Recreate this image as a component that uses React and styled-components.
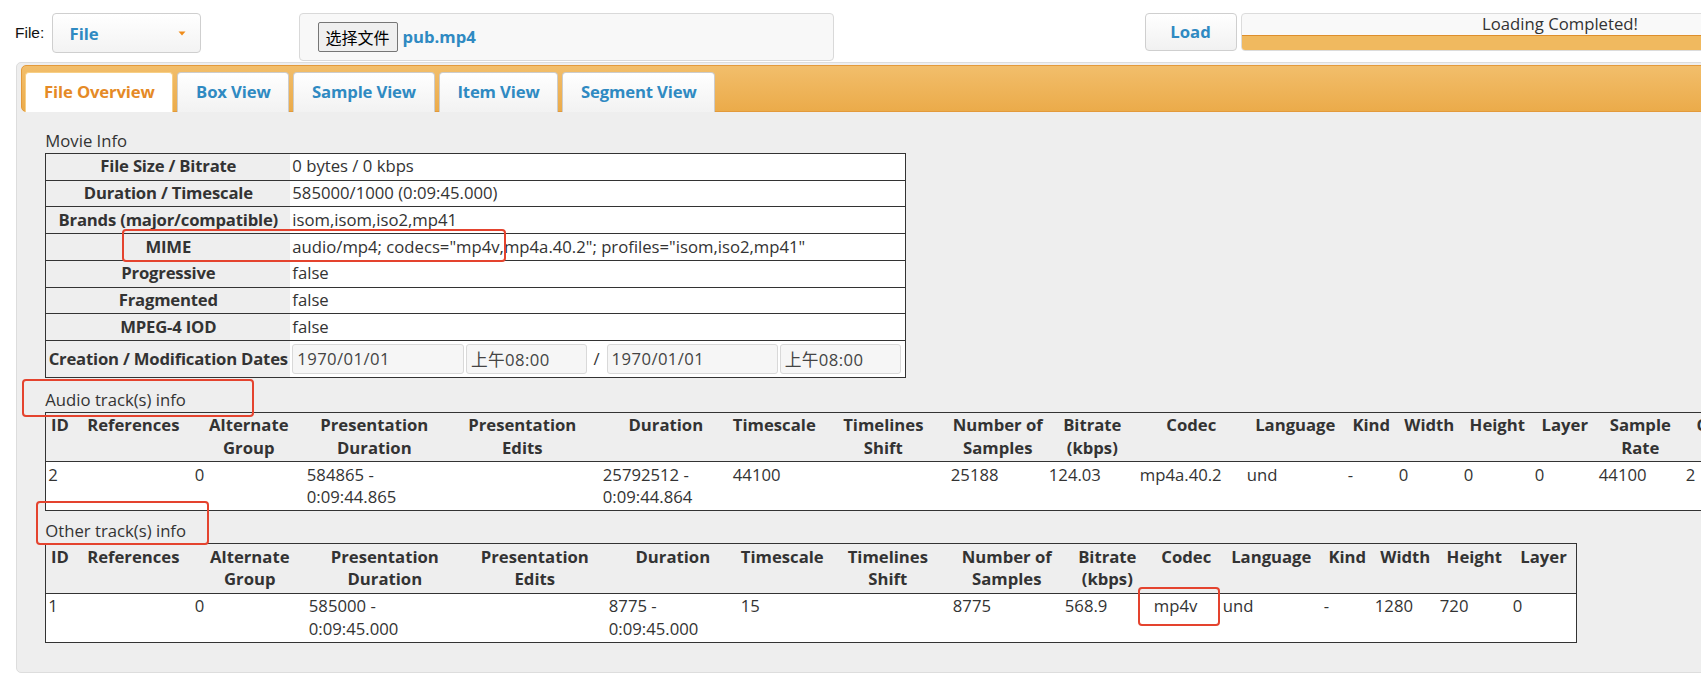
import React from 'react';
import styled, { createGlobalStyle } from 'styled-components';

const FONT = `"Open Sans", "Noto Sans CJK SC", sans-serif`;

const GlobalStyle = createGlobalStyle`
  html, body { margin: 0; padding: 0; overflow: hidden; background: #fff; }
  body { font-family: ${FONT}; font-size: 16.7px; color: #333; }
  * { box-sizing: border-box; }
`;

const Page = styled.div`
  position: relative;
  width: 1900px;
  padding-top: 13px;
`;

const TopBar = styled.div`
  display: flex;
  align-items: flex-start;
  height: 48px;
`;

const FieldLabel = styled.span`
  margin-left: 15px;
  width: 36.5px;
  line-height: 40px;
  font-family: "Liberation Sans", Arial, sans-serif;
  font-size: 15.5px;
  color: #111;
`;

const Select = styled.div`
  width: 149px;
  height: 40px;
  display: flex;
  align-items: center;
  justify-content: space-between;
  padding: 0 14px 0 17px;
  border: 1px solid #cfcfcf;
  border-radius: 4px;
  background: linear-gradient(#ffffff, #f3f3f3);
  color: #2f8ac2;
  font-weight: 700;
`;

const FileBox = styled.div`
  margin-left: 98px;
  width: 535px;
  height: 47.5px;
  display: flex;
  align-items: center;
  gap: 5px;
  padding-left: 18px;
  border: 1px solid #d9d9d9;
  border-radius: 4px;
  background: #f8f8f8;
`;

const NativeButton = styled.button`
  height: 30px;
  padding: 0 7px;
  border: 1px solid #767676;
  border-radius: 2px;
  background: #efefef;
  font-family: "Noto Sans CJK SC", sans-serif;
  font-size: 16px;
  color: #000;
`;

const FileName = styled.span`
  color: #2f8ac2;
  font-weight: 700;
`;

const LoadButton = styled.div`
  margin-left: 311px;
  width: 92px;
  height: 37.5px;
  display: flex;
  align-items: center;
  justify-content: center;
  border: 1px solid #cfcfcf;
  border-radius: 4px;
  background: linear-gradient(#ffffff, #f1f1f1);
  color: #2f8ac2;
  font-weight: 700;
`;

const Progress = styled.div`
  margin-left: 4px;
  width: 639px;
  height: 37.5px;
  display: flex;
  flex-direction: column;
  border: 1px solid #dcdcdc;
  border-radius: 4px;
  overflow: hidden;
  background: #f9f9f9;
`;

const ProgressLabel = styled.div`
  height: 20.7px;
  line-height: 20px;
  text-align: center;
  color: #333;
`;

const ProgressFill = styled.div`
  flex: 1;
  border-top: 1px solid #de8f2c;
  background: #f0b95f;
`;

const Container = styled.div`
  margin: 1px 0 0 16px;
  width: 1880px;
  border: 1px solid #dddddd;
  border-radius: 5px;
  background: #eeeeee;
  padding: 2.3px 4.3px 2.3px;
`;

const TabBar = styled.div`
  height: 46.7px;
  display: flex;
  align-items: flex-end;
  gap: 3.9px;
  padding: 0 3px;
  border: 1px solid #e39a3b;
  border-radius: 5px;
  background: linear-gradient(#f2be6b, #ebab4a);
`;

const Tab = styled.div`
  height: 40px;
  margin-bottom: -1px;
  padding: 0 17.8px;
  line-height: 38px;
  font-weight: 700;
  letter-spacing: -0.15px;
  border: 1px solid ${p => (p.$active ? '#f7cf86' : '#cccccc')};
  border-bottom: none;
  border-radius: 4px 4px 0 0;
  background: ${p => (p.$active ? '#ffffff' : 'linear-gradient(#ffffff, #f2f2f2)')};
  color: ${p => (p.$active ? '#e58a26' : '#2f8ac2')};
`;

const Panel = styled.div`
  padding: 18.3px 0 27px 24px;
`;

const SectionLabel = styled.div`
  line-height: 22.7px;
  margin-top: ${p => p.$gap}px;
`;

const MovieTable = styled.table`
  width: 861px;
  table-layout: fixed;
  border-collapse: collapse;
  border: 1px solid #333;
  line-height: 22.7px;
  tr { border-top: 1px solid #333; }
`;

const HeadCell = styled.th`
  width: 244.5px;
  padding: 1.5px 1px;
  background: #eeeeee;
  font-weight: 700;
  letter-spacing: -0.2px;
  text-align: center;
  white-space: nowrap;
`;

const ValueCell = styled.td`
  padding: 1.5px 2px;
  background: #ffffff;
  white-space: nowrap;
`;

const DateRow = styled.div`
  height: 33px;
  display: flex;
  align-items: center;
`;

const DateInput = styled.input`
  flex: none;
  width: ${p => p.$w}px;
  height: 30px;
  margin-right: ${p => p.$gap}px;
  padding: 0 4px;
  border: 1px solid #d9d9d9;
  border-radius: 3px;
  background: #f6f6f6;
  font-family: ${FONT};
  font-size: 16.7px;
  letter-spacing: 0.4px;
  color: #444;
  outline: none;
`;

const Slash = styled.span`
  flex: none;
  padding: 0 7px 0 6px;
  color: #333;
`;

const TrackTable = styled.table`
  table-layout: fixed;
  width: ${p => p.$w}px;
  border-collapse: collapse;
  border: 1px solid #333;
  line-height: 22.7px;
`;

const TrackHead = styled.th`
  padding: 1.5px 2px;
  font-weight: 700;
  text-align: center;
  vertical-align: top;
  white-space: nowrap;
  border-bottom: 1px solid #333;
`;

const TrackCell = styled.td`
  padding: 1.5px 2px;
  background: #ffffff;
  text-align: left;
  vertical-align: top;
  white-space: nowrap;
`;

const Mark = styled.div`
  position: absolute;
  left: ${p => p.$x}px;
  top: ${p => p.$y}px;
  width: ${p => p.$w}px;
  height: ${p => p.$h}px;
  border: 2px solid #e4432e;
  border-radius: 4px;
  pointer-events: none;
`;

const Caret = () => (
  <svg width="8" height="5" viewBox="0 0 8 5">
    <polygon points="0.5,0.5 7.5,0.5 4,4.5" fill="#ef8c1a" />
  </svg>
);

const movieRows = [
  ['File Size / Bitrate', '0 bytes / 0 kbps'],
  ['Duration / Timescale', '585000/1000 (0:09:45.000)'],
  ['Brands (major/compatible)', 'isom,isom,iso2,mp41'],
  ['MIME', 'audio/mp4; codecs="mp4v,mp4a.40.2"; profiles="isom,iso2,mp41"'],
  ['Progressive', 'false'],
  ['Fragmented', 'false'],
  ['MPEG-4 IOD', 'false'],
];

const audioCols = [
  [28, ['ID'], ['2']],
  [119, ['References'], []],
  [112, ['Alternate', 'Group'], ['0']],
  [139, ['Presentation', 'Duration'], ['584865 -', '0:09:44.865']],
  [157, ['Presentation', 'Edits'], []],
  [130, ['Duration'], ['25792512 -', '0:09:44.864']],
  [87, ['Timescale'], ['44100']],
  [131, ['Timelines', 'Shift'], []],
  [98, ['Number of', 'Samples'], ['25188']],
  [91, ['Bitrate', '(kbps)'], ['124.03']],
  [107, ['Codec'], ['mp4a.40.2']],
  [101, ['Language'], ['und']],
  [51, ['Kind'], ['-']],
  [65, ['Width'], ['0']],
  [71, ['Height'], ['0']],
  [64, ['Layer'], ['0']],
  [87, ['Sample', 'Rate'], ['44100']],
  [94, ['Channel', 'Count'], ['2']],
  [80, ['Volume'], ['1']],
];

const otherCols = [
  [28, ['ID'], ['1']],
  [119, ['References'], []],
  [114, ['Alternate', 'Group'], ['0']],
  [156, ['Presentation', 'Duration'], ['585000 -', '0:09:45.000']],
  [144, ['Presentation', 'Edits'], []],
  [132, ['Duration'], ['8775 -', '0:09:45.000']],
  [86, ['Timescale'], ['15']],
  [126, ['Timelines', 'Shift'], []],
  [112, ['Number of', 'Samples'], ['8775']],
  [89, ['Bitrate', '(kbps)'], ['568.9']],
  [69, ['Codec'], ['mp4v']],
  [101, ['Language'], ['und']],
  [51, ['Kind'], ['-']],
  [65, ['Width'], ['1280']],
  [73, ['Height'], ['720']],
  [66, ['Layer'], ['0']],
];

const Lines = ({ lines }) =>
  lines.map((l, i) => (
    <React.Fragment key={i}>
      {i > 0 && <br />}
      {l}
    </React.Fragment>
  ));

const Track = ({ cols }) => {
  const total = cols.reduce((s, c) => s + c[0], 0);
  return (
    <TrackTable $w={total}>
      <colgroup>
        {cols.map((c, i) => (
          <col key={i} style={{ width: c[0] }} />
        ))}
      </colgroup>
      <thead>
        <tr>
          {cols.map((c, i) => (
            <TrackHead key={i}>
              <Lines lines={c[1]} />
            </TrackHead>
          ))}
        </tr>
      </thead>
      <tbody>
        <tr>
          {cols.map((c, i) => (
            <TrackCell key={i}>
              {c[2].length ? <Lines lines={c[2]} /> : <>&nbsp;<br />&nbsp;</>}
            </TrackCell>
          ))}
        </tr>
      </tbody>
    </TrackTable>
  );
};

const tabs = ['File Overview', 'Box View', 'Sample View', 'Item View', 'Segment View'];

export default function App() {
  return (
    <>
      <GlobalStyle />
      <Page>
        <TopBar>
          <FieldLabel>File:</FieldLabel>
          <Select>
            <span>File</span>
            <Caret />
          </Select>
          <FileBox>
            <NativeButton>选择文件</NativeButton>
            <FileName>pub.mp4</FileName>
          </FileBox>
          <LoadButton>Load</LoadButton>
          <Progress>
            <ProgressLabel>Loading Completed!</ProgressLabel>
            <ProgressFill />
          </Progress>
        </TopBar>
        <Container>
          <TabBar>
            {tabs.map((t, i) => (
              <Tab key={t} $active={i === 0}>
                {t}
              </Tab>
            ))}
          </TabBar>
          <Panel>
            <SectionLabel $gap={0}>Movie Info</SectionLabel>
            <MovieTable>
              <colgroup>
                <col style={{ width: 244.5 }} />
                <col />
              </colgroup>
              <tbody>
                {movieRows.map(([k, v]) => (
                  <tr key={k}>
                    <HeadCell>{k}</HeadCell>
                    <ValueCell>{v}</ValueCell>
                  </tr>
                ))}
                <tr>
                  <HeadCell>Creation / Modification Dates</HeadCell>
                  <ValueCell>
                    <DateRow>
                      <DateInput $w={172} $gap={1.6} readOnly value="1970/01/01" />
                      <DateInput $w={121.6} $gap={0} readOnly value="上午08:00" />
                      <Slash>/</Slash>
                      <DateInput $w={171.7} $gap={1.4} readOnly value="1970/01/01" />
                      <DateInput $w={121.4} $gap={0} readOnly value="上午08:00" />
                    </DateRow>
                  </ValueCell>
                </tr>
              </tbody>
            </MovieTable>
            <SectionLabel $gap={11}>Audio track(s) info</SectionLabel>
            <Track cols={audioCols} />
            <SectionLabel $gap={9}>Other track(s) info</SectionLabel>
            <Track cols={otherCols} />
          </Panel>
        </Container>
        <Mark $x={121.7} $y={229.3} $w={384} $h={32.4} />
        <Mark $x={21.7} $y={379} $w={232} $h={37.5} />
        <Mark $x={35.7} $y={500.5} $w={173.5} $h={44.5} />
        <Mark $x={1137.8} $y={586.5} $w={82.7} $h={39} />
      </Page>
    </>
  );
}
